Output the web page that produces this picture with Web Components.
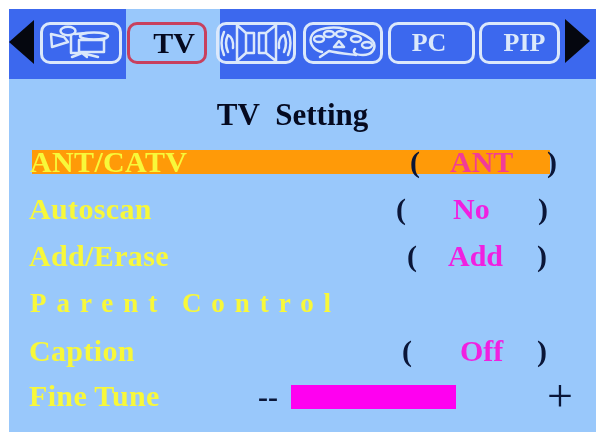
<!DOCTYPE html>
<html>
<head>
<meta charset="utf-8">
<style>
  body { margin: 0; background: #fff; font: bold 30px "Liberation Serif", serif; }
</style>
</head>
<body>
<tv-osd>
  <tv-arrow slot="tabs" dir="left"></tv-arrow>
  <tv-tab slot="tabs" style="--box:82px;--cell:86px">
    <svg viewBox="0 0 82 42" width="82" height="42" fill="none" stroke="currentColor" stroke-width="2.5" stroke-linejoin="round" stroke-linecap="round">
      <polygon points="11,12 24,15 28,20 12,25"/>
      <ellipse cx="28" cy="9" rx="7.5" ry="4.2"/>
      <ellipse cx="54" cy="14" rx="14" ry="3.6"/>
      <rect x="39" y="18" width="25" height="12"/>
      <path d="M31 13 V31 H39 M35 12 L46 11"/>
      <path d="M32 35 L42 31 L47 35 M42 31 L58 35"/>
    </svg>
  </tv-tab>
  <tv-tab slot="tabs" active style="--box:80px;--cell:94px;--offset:1px;--text-pad:14px"><span>TV</span></tv-tab>
  <tv-tab slot="tabs" style="--box:80px;--cell:87px;--pull:-4px">
    <svg viewBox="0 0 80 42" width="80" height="42" fill="none" stroke="currentColor" stroke-width="2.5" stroke-linejoin="round" stroke-linecap="round">
      <path d="M21 3 V39 L30 31 V11 Z M30 11 H38 V31 H30"/>
      <path d="M60 3 V39 L50 31 V11 Z M50 11 H43 V31 H50"/>
      <path d="M8 10 Q3 21 8 33 M12 13 Q8 21 12 30 M12 13 Q18 16 17 26"/>
      <path d="M72 10 Q77 21 72 33 M68 13 Q72 21 68 30 M68 13 Q62 16 63 26"/>
    </svg>
  </tv-tab>
  <tv-tab slot="tabs" style="--box:80px;--cell:85px">
    <svg viewBox="0 0 80 42" width="80" height="42" fill="none" stroke="currentColor" stroke-width="2.5" stroke-linejoin="round" stroke-linecap="round">
      <path d="M19 30 C10 28 5 20 9 13 C13 6 30 4 42 7 C55 9 68 15 71 21 C73 28 68 33 60 33 C52 33 49 30 52 27"/>
      <path d="M17 35 L26 29 C34 31 45 32 53 33"/>
      <ellipse cx="16" cy="17" rx="5" ry="3"/>
      <ellipse cx="26" cy="12" rx="5" ry="3"/>
      <ellipse cx="38" cy="12" rx="5" ry="3"/>
      <ellipse cx="53" cy="17" rx="5" ry="3"/>
      <ellipse cx="64" cy="23" rx="5" ry="3"/>
      <polygon points="36,19 31,25 41,25"/>
    </svg>
  </tv-tab>
  <tv-tab slot="tabs" style="--box:87px;--cell:91px;--text-pad:0;--text-end:5px"><span>PC</span></tv-tab>
  <tv-tab slot="tabs" style="--box:81px;--cell:86px;--text-pad:10px"><span>PIP</span></tv-tab>
  <tv-arrow slot="tabs" dir="right"></tv-arrow>

  <tv-title>TV&nbsp; Setting</tv-title>
  <tv-row selected label="ANT/CATV" value="ANT" style="--a:380px;--b:40px;--c:97px;--h:47px"></tv-row>
  <tv-row label="Autoscan" value="No" style="--a:367px;--b:57px;--c:85px;--h:47px"></tv-row>
  <tv-row label="Add/Erase" value="Add" style="--a:378px;--b:41px;--c:89px;--h:48px"></tv-row>
  <tv-row spaced label="Parent Control" style="--h:47px"></tv-row>
  <tv-row label="Caption" value="Off" style="--a:373px;--b:58px;--c:77px;--h:47px"></tv-row>
  <tv-row label="Fine Tune" style="--h:44px;--a:229px">
    <tv-slider></tv-slider>
  </tv-row>
</tv-osd>

<script>
class TvOsd extends HTMLElement {
  constructor() {
    super();
    this.attachShadow({mode: 'open'});
    this.shadowRoot.innerHTML = `
      <style>
        :host {
          display: flex;
          flex-direction: column;
          width: 587px;
          height: 423px;
          margin: 9px 0 0 9px;
          background: #99c8fb;
          filter: blur(0.6px);
        }
        #bar {
          display: flex;
          height: 70px;
          flex: none;
          background: #3c68ee;
        }
      </style>
      <div id="bar"><slot name="tabs"></slot></div>
      <slot></slot>
    `;
  }
}

class TvArrow extends HTMLElement {
  constructor() {
    super();
    this.attachShadow({mode: 'open'});
  }

  connectedCallback() {
    const left = this.getAttribute('dir') === 'left';
    this.shadowRoot.innerHTML = `
      <style>
        :host {
          display: flex;
          align-items: center;
          flex: none;
          width: 31px;
        }
        svg { display: block; margin-bottom: ${left ? '4px' : '7px'}; }
      </style>
      <svg width="25" height="44" viewBox="0 0 25 44">
        <polygon points="${left ? '0,22 25,0 25,44' : '0,0 25,22 0,44'}" fill="#05070f"/>
      </svg>
    `;
  }
}

class TvTab extends HTMLElement {
  constructor() {
    super();
    this.attachShadow({mode: 'open'});
    this.shadowRoot.innerHTML = `
      <style>
        :host {
          display: flex;
          align-items: center;
          flex: none;
          box-sizing: border-box;
          width: var(--cell);
          margin-left: var(--pull, 0);
          padding-left: var(--offset, 0);
          color: #dbe8fb;
          font-size: 26px;
        }
        :host([active]) {
          background: #99c8fb;
          color: #050a20;
          font-size: 30px;
        }
        #box {
          display: flex;
          align-items: center;
          justify-content: center;
          box-sizing: border-box;
          width: var(--box);
          height: 42px;
          margin-bottom: 3px;
          border: 3px solid currentColor;
          border-radius: 10px;
          padding-left: var(--text-pad, 0);
          padding-right: var(--text-end, 0);
        }
        :host([active]) #box { border-color: #c8405e; }
        ::slotted(svg) {
          flex: none;
          margin: -3px;
          display: block;
        }
      </style>
      <div id="box"><slot></slot></div>
    `;
  }
}

class TvTitle extends HTMLElement {
  constructor() {
    super();
    this.attachShadow({mode: 'open'});
    this.shadowRoot.innerHTML = `
      <style>
        :host {
          display: block;
          height: 59px;
          padding-right: 20px;
          text-align: center;
          color: #050a20;
          line-height: 71px;
          font-size: 31px;
        }
      </style>
      <slot></slot>
    `;
  }
}

class TvRow extends HTMLElement {
  constructor() {
    super();
    this.attachShadow({mode: 'open'});
  }

  connectedCallback() {
    const value = this.getAttribute('value');
    const label = this.getAttribute('label');
    const choice = value ? `<b>(</b><i>${value}</i><b>)</b>` : '';
    this.shadowRoot.innerHTML = `
      <style>
        :host {
          display: grid;
          grid-template-columns: var(--a, 240px) var(--b, auto) var(--c, auto) auto;
          justify-items: start;
          align-items: center;
          box-sizing: border-box;
          height: var(--h);
          padding-left: 20px;
          color: #f8f83a;
          line-height: 1;
        }
        :host([selected]) {
          padding-left: 21px;
          background: linear-gradient(#ff9a08, #ff9a08) 23px 50% / 518px 24px no-repeat;
        }
        #label { white-space: nowrap; letter-spacing: 0.35px; }
        :host([spaced]) { padding-left: 21px; }
        :host([spaced]) #label {
          font-size: 27px;
          letter-spacing: 9.95px;
          word-spacing: -2px;
        }
        b { color: #0a1638; font-weight: bold; }
        i { color: #f020e0; font-style: normal; }
        :host([selected]) i { color: #f23c96; }
      </style>
      <span id="label">${label}</span>${choice}<slot></slot>
    `;
  }
}

class TvSlider extends HTMLElement {
  constructor() {
    super();
    this.attachShadow({mode: 'open'});
    this.shadowRoot.innerHTML = `
      <style>
        :host {
          display: flex;
          align-items: center;
          height: 26px;
          color: #0a1638;
        }
        #minus { width: 33px; font-size: 30px; margin-top: 2px; }
        #level { width: 165px; height: 24px; margin-top: 2px; background: #ff00f0; }
        #plus {
          margin-left: 91px;
          font: normal 46px/24px "Liberation Serif", serif;
        }
      </style>
      <span id="minus">--</span>
      <div id="level"></div>
      <span id="plus">+</span>
    `;
  }
}

customElements.define('tv-osd', TvOsd);
customElements.define('tv-arrow', TvArrow);
customElements.define('tv-tab', TvTab);
customElements.define('tv-title', TvTitle);
customElements.define('tv-row', TvRow);
customElements.define('tv-slider', TvSlider);
</script>
</body>
</html>
